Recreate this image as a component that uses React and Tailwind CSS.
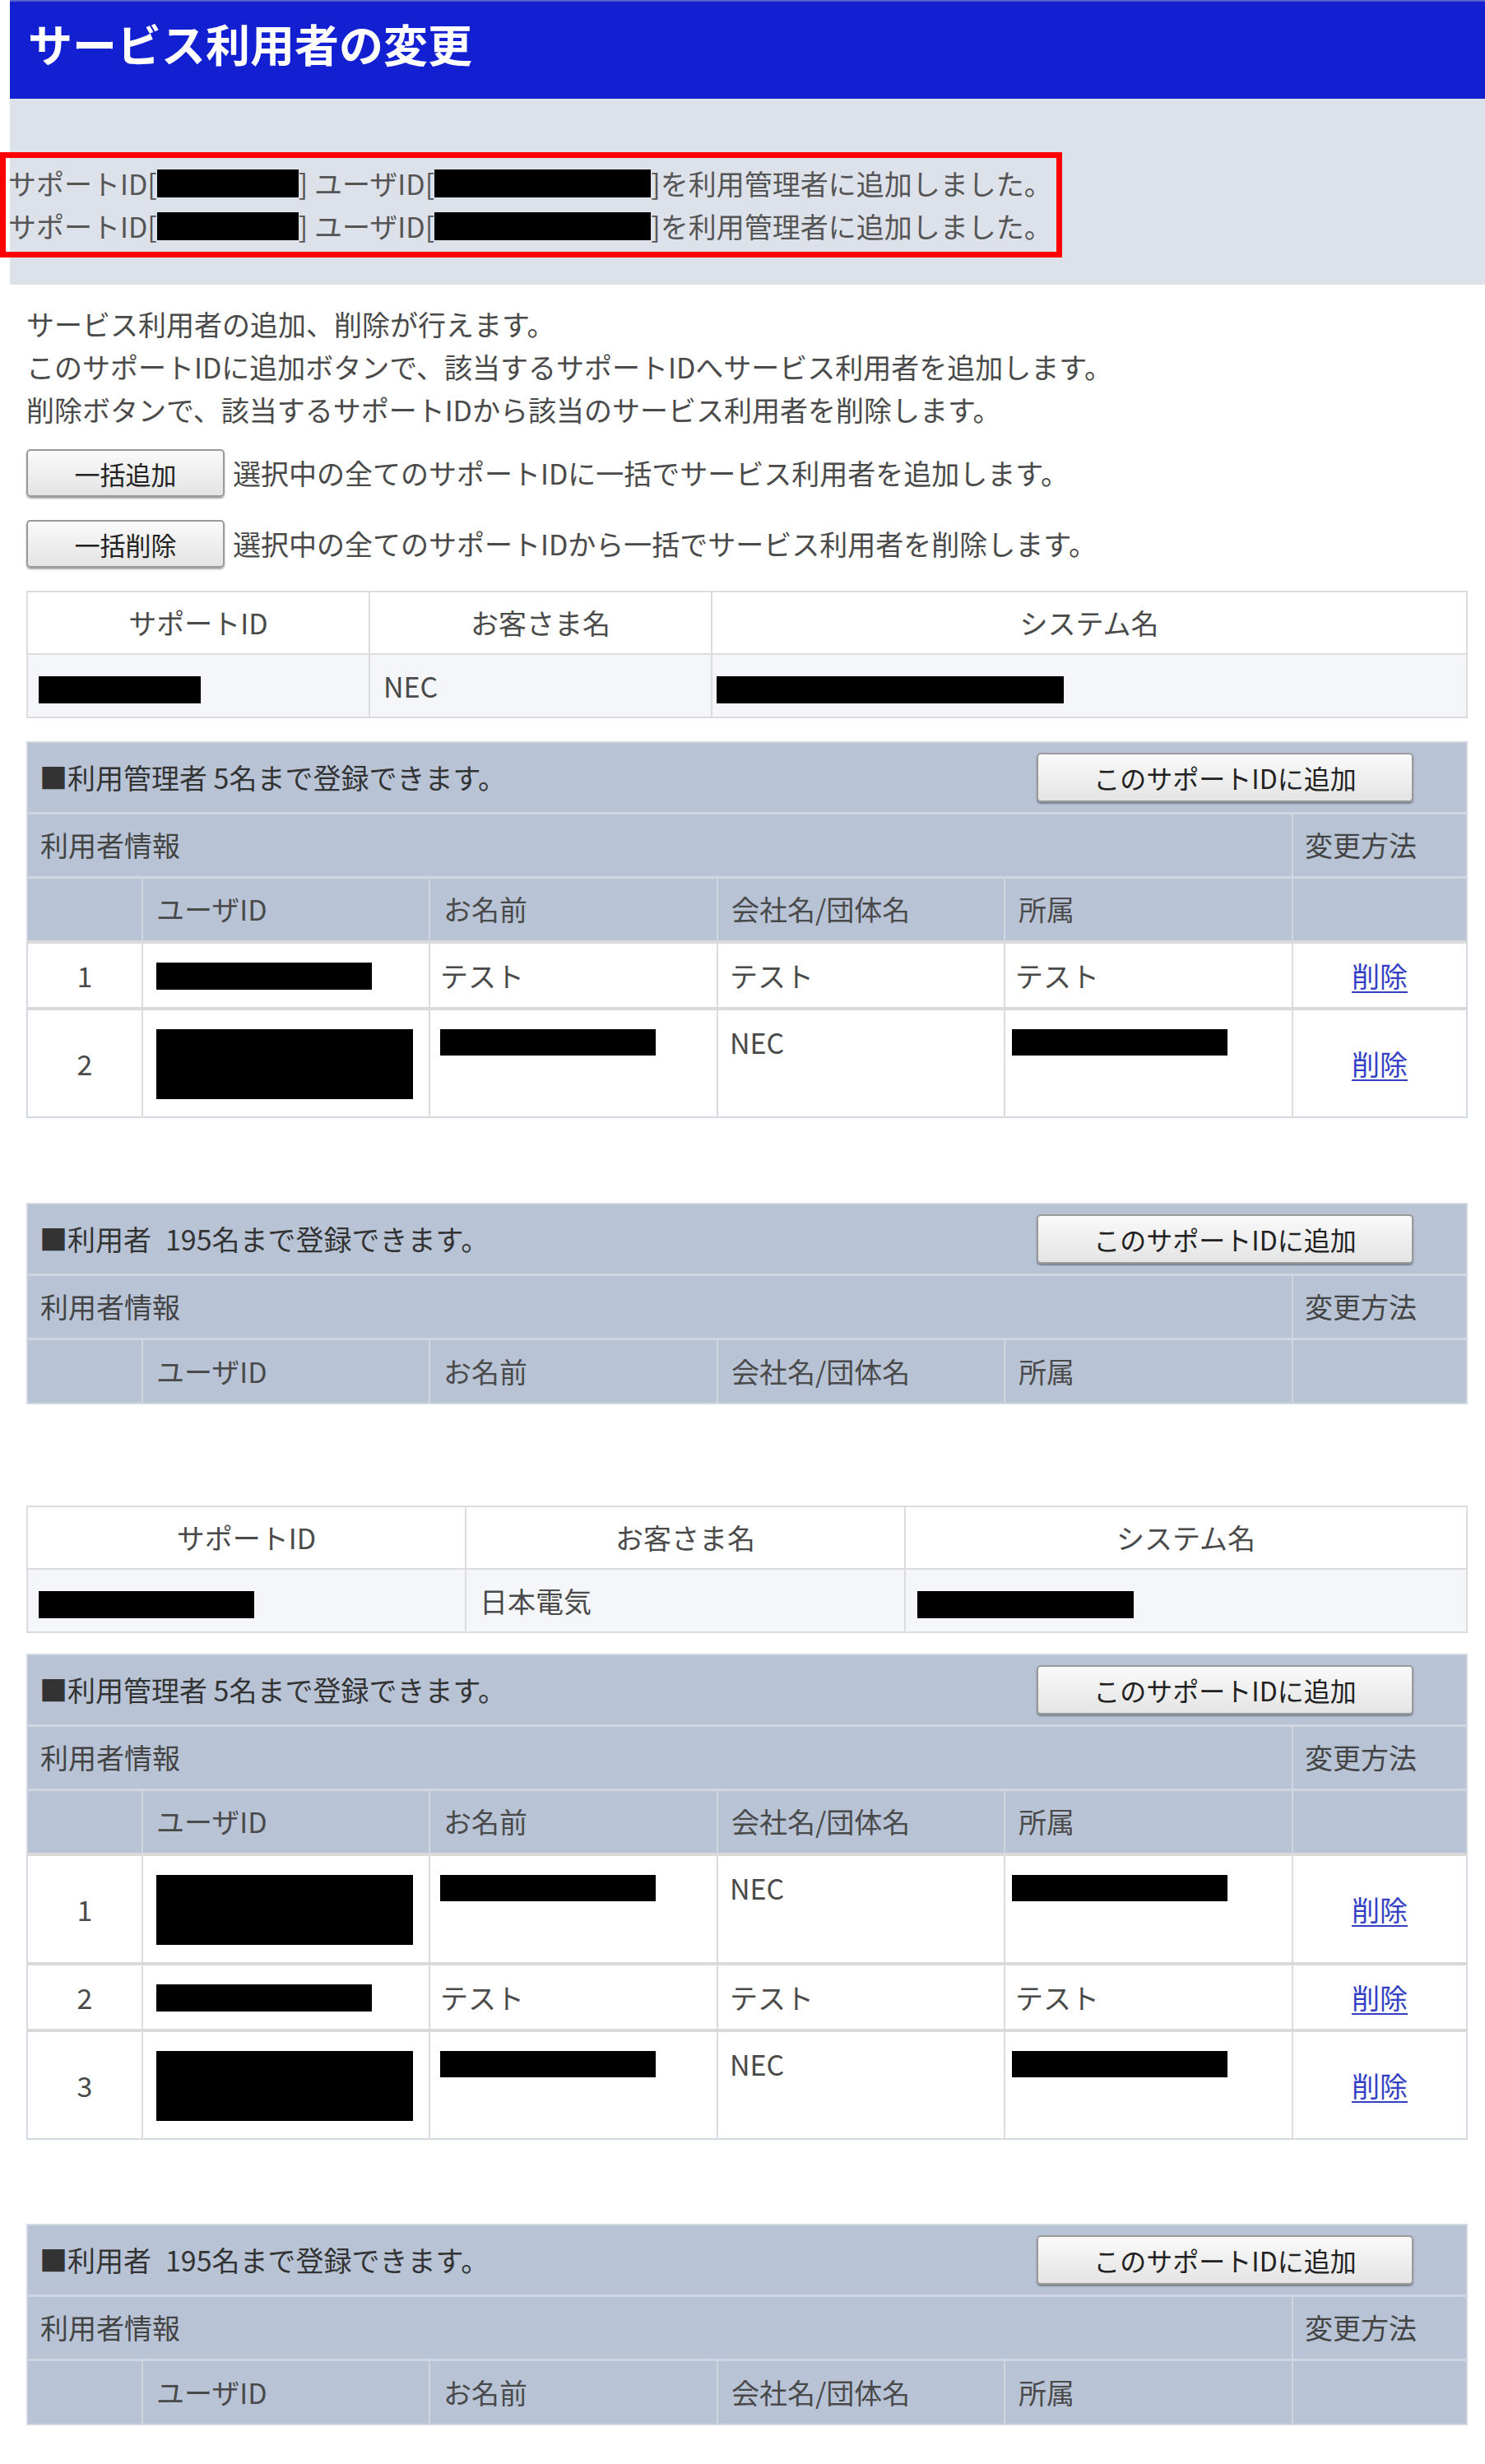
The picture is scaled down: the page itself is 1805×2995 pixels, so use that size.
import React from "react";

const Box = ({ c }) => <span className={"inline-block bg-black align-middle " + c} />;

const btn =
  "bg-gradient-to-b from-[#fafafa] to-[#e4e4e4] border-2 border-[#9a9a9a] rounded-[5px] shadow-[0_2px_2px_rgba(0,0,0,0.35)] text-[#222] leading-none";

function SupportTable({ widths, name, idBox, sysBox }) {
  return (
    <table className="w-[1750px] table-fixed border-collapse border-2 border-[#dcdcdc]">
      <colgroup>
        <col className={widths[0]} />
        <col className={widths[1]} />
        <col className={widths[2]} />
      </colgroup>
      <tbody>
        <tr className="h-[76px] bg-white">
          <td className="border-2 border-[#dcdcdc] text-center">サポートID</td>
          <td className="border-2 border-[#dcdcdc] text-center">お客さま名</td>
          <td className="border-2 border-[#dcdcdc] text-center">システム名</td>
        </tr>
        <tr className="h-[77px] bg-[#f4f6f9]">
          <td className="border-2 border-[#dcdcdc] pl-[13px]">{idBox}</td>
          <td className="border-2 border-[#dcdcdc] pl-[16px]">{name}</td>
          <td className="border-2 border-[#dcdcdc] pl-[5px]">{sysBox}</td>
        </tr>
      </tbody>
    </table>
  );
}

const hd = "border-l-2 border-[#cfd6e2]";
const dc = "border-l-2 border-[#dcdcdc] align-top pt-[13px] pb-[12px]";

function Line({ children }) {
  return <div className="h-[52px] flex items-center">{children}</div>;
}

function Section({ title, rows }) {
  return (
    <table className="w-[1750px] table-fixed border-collapse border-2 border-[#d3d9e3]">
      <colgroup>
        <col className="w-[140px]" />
        <col className="w-[349px]" />
        <col className="w-[350px]" />
        <col className="w-[349px]" />
        <col className="w-[350px]" />
        <col className="w-[212px]" />
      </colgroup>
      <tbody>
        <tr className="h-[86px] bg-[#b8c4d6]">
          <td colSpan={6} className="pl-[14px] pr-[64px]">
            <div className="flex items-center justify-between">
              <span className="whitespace-pre text-[#333]">{title}</span>
              <button className={btn + " w-[458px] h-[60px] text-[32px]"}>このサポートIDに追加</button>
            </div>
          </td>
        </tr>
        <tr className="h-[78px] bg-[#b8c4d6] border-t-[3px] border-[#cfd6e2]">
          <td colSpan={5} className="pl-[15px] text-[#444]">利用者情報</td>
          <td className={hd + " pl-[14px] text-[#444]"}>変更方法</td>
        </tr>
        <tr className="h-[79px] bg-[#b8c4d6] border-t-[3px] border-[#cfd6e2]">
          <td></td>
          <td className={hd + " pl-[16px]"}>ユーザID</td>
          <td className={hd + " pl-[16px]"}>お名前</td>
          <td className={hd + " pl-[16px]"}>会社名/団体名</td>
          <td className={hd + " pl-[16px]"}>所属</td>
          <td className={hd}></td>
        </tr>
        {rows.map((r, i) => (
          <tr key={i} className="bg-white border-t-[4px] border-[#dadada]">
            <td className="text-center align-middle">{i + 1}</td>
            <td className={dc + " pl-[16px]"}>{r[0]}</td>
            <td className={dc + " pl-[12px]"}>{r[1]}</td>
            <td className={dc + " pl-[14px]"}>{r[2]}</td>
            <td className={dc + " pl-[8px]"}>{r[3]}</td>
            <td className="border-l-2 border-[#dcdcdc] text-center align-middle">
              <a className="text-[#3340c4] underline underline-offset-[5px] decoration-[2px]" href="#">削除</a>
            </td>
          </tr>
        ))}
      </tbody>
    </table>
  );
}

const single = (
  <Line>
    <Box c="w-[262px] h-[33px]" />
  </Line>
);
const dbl = (
  <div className="h-[104px] flex items-center">
    <Box c="w-[312px] h-[85px]" />
  </div>
);
const nameBox = (
  <Line>
    <Box c="w-[262px] h-[32px]" />
  </Line>
);
const txt = (t) => <Line><span className="pl-[4px]">{t}</span></Line>;
const txt0 = (t) => <Line>{t}</Line>;

export default function App() {
  return (
    <div className="w-[1805px] min-h-[2995px] bg-white text-[34px] leading-[52px] text-[#4a4a4a] font-['Noto_Sans_CJK_JP','Noto_Sans',sans-serif]">
      <div className="ml-[12px] h-[120px] bg-[#1320d2] border-t-2 border-[#5560c8] flex items-center pl-[22px] pb-[16px]">
        <h1 className="text-[54px] font-bold text-white leading-none">サービス利用者の変更</h1>
      </div>
      <div className="ml-[12px] bg-[#dde1ea] pt-[65px] pb-[33px]">
        <div className="-ml-[12px] w-[1291px] border-[7px] border-[#ff0000] py-[5px] pl-[3px] text-[#555]">
          {[0, 1].map((k) => (
            <div key={k} className="h-[52px] flex items-center whitespace-pre">
              <span>サポートID[</span>
              <Box c="w-[172px] h-[34px]" />
              <span>] ユーザID[</span>
              <Box c="w-[263px] h-[34px]" />
              <span>]を利用管理者に追加しました。</span>
            </div>
          ))}
        </div>
      </div>

      <div className="pl-[32px] pt-[22px] pb-[48px] flex flex-col">
        <p>サービス利用者の追加、削除が行えます。</p>
        <p>このサポートIDに追加ボタンで、該当するサポートIDへサービス利用者を追加します。</p>
        <p>削除ボタンで、該当するサポートIDから該当のサービス利用者を削除します。</p>

        <div className="mt-[22px] flex items-center gap-[10px]">
          <button className={btn + " w-[241px] h-[58px] text-[31px]"}>一括追加</button>
          <span>選択中の全てのサポートIDに一括でサービス利用者を追加します。</span>
        </div>
        <div className="mt-[28px] flex items-center gap-[10px]">
          <button className={btn + " w-[241px] h-[58px] text-[31px]"}>一括削除</button>
          <span>選択中の全てのサポートIDから一括でサービス利用者を削除します。</span>
        </div>

        <div className="mt-[28px]">
          <SupportTable
            widths={["w-[416px]", "w-[416px]", "w-[918px]"]}
            name="NEC"
            idBox={<Box c="w-[197px] h-[33px]" />}
            sysBox={<Box c="w-[422px] h-[33px]" />}
          />
        </div>

        <div className="mt-[28px]">
          <Section
            title="■利用管理者 5名まで登録できます。"
            rows={[
              [single, txt0("テスト"), txt0("テスト"), txt("テスト")],
              [dbl, nameBox, txt0("NEC"), nameBox],
            ]}
          />
        </div>

        <div className="mt-[103px]">
          <Section title={"■利用者\u2002195名まで登録できます。"} rows={[]} />
        </div>

        <div className="mt-[123px]">
          <SupportTable
            widths={["w-[533px]", "w-[534px]", "w-[683px]"]}
            name="日本電気"
            idBox={<Box c="w-[262px] h-[33px]" />}
            sysBox={<span className="pl-[9px]"><Box c="w-[263px] h-[33px]" /></span>}
          />
        </div>

        <div className="mt-[25px]">
          <Section
            title="■利用管理者 5名まで登録できます。"
            rows={[
              [dbl, nameBox, txt0("NEC"), nameBox],
              [single, txt0("テスト"), txt0("テスト"), txt("テスト")],
              [dbl, nameBox, txt0("NEC"), nameBox],
            ]}
          />
        </div>

        <div className="mt-[102px]">
          <Section title={"■利用者\u2002195名まで登録できます。"} rows={[]} />
        </div>
      </div>
    </div>
  );
}
